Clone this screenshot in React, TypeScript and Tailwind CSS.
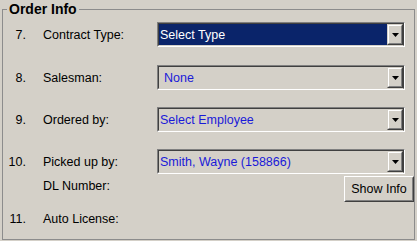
import React from "react";

const font = { fontFamily: '"Liberation Sans", Arial, sans-serif' };

function Arrow() {
  return (
    <div className="w-[16px] h-full bg-[#d4d0c8] border border-t-[#d4d0c8] border-l-[#d4d0c8] border-b-[#404040] border-r-[#404040]">
      <div className="w-full h-full border border-t-white border-l-white border-b-[#808080] border-r-[#808080] flex items-center justify-center">
        <svg width="7" height="4" viewBox="0 0 7 4">
          <polygon points="0,0 7,0 3.5,4" fill="#000" />
        </svg>
      </div>
    </div>
  );
}

function Combo({ text, selected, indent }: { text: string; selected?: boolean; indent?: boolean }) {
  return (
    <div className="w-[248px] h-[25px] border border-t-[#808080] border-l-[#808080] border-b-white border-r-white">
      <div className="w-full h-full border border-t-[#404040] border-l-[#404040] border-b-[#d4d0c8] border-r-[#404040] flex">
        <div
          className={
            selected
              ? "flex-1 flex items-center bg-[#0a246a] text-white pl-[1px]"
              : indent
              ? "flex-1 flex items-center text-[#1a1ad8] pl-[5px]"
              : "flex-1 flex items-center text-[#1a1ad8] pl-[1px]"
          }
        >
          <span className="text-[12.5px] leading-[16px]">{text}</span>
        </div>
        <Arrow />
      </div>
    </div>
  );
}

function Row({ num, label, children }: { num?: string; label: string; children?: React.ReactNode }) {
  return (
    <div className="flex items-center h-[25px]">
      <div className="w-[23px] text-right text-[12.5px] leading-[16px] mt-[1px]">{num}</div>
      <div className="w-[114px] ml-[17px] text-[12.5px] leading-[16px] mt-[1px]">{label}</div>
      {children}
    </div>
  );
}

export default function App() {
  return (
    <div className="w-[417px] h-[241px] bg-[#d4d0c8] text-black pt-[1px]" style={font}>
      <fieldset className="ml-[2px] w-[413px] h-[239px] border border-[#8c8c8c] pt-[5px]">
        <legend className="ml-[4px] px-[2px] text-[14px] leading-[16px] font-bold">Order Info</legend>
        <div className="flex flex-col">
          <Row num="7." label="Contract Type:">
            <Combo text="Select Type" selected />
          </Row>
          <div className="mt-[18px]">
            <Row num="8." label="Salesman:">
              <Combo text="None" indent />
            </Row>
          </div>
          <div className="mt-[17px]">
            <Row num="9." label="Ordered by:">
              <Combo text="Select Employee" />
            </Row>
          </div>
          <div className="mt-[17px]">
            <Row num="10." label="Picked up by:">
              <Combo text="Smith, Wayne (158866)" />
            </Row>
          </div>
          <div className="mt-[2px] flex h-[26px]">
            <div className="w-[23px]" />
            <div className="w-[114px] ml-[17px] mt-[2px] text-[12.5px] leading-[16px]">DL Number:</div>
            <div className="ml-[187px] w-[70px] h-[26px] bg-[#d4d0c8] border border-t-white border-l-white border-b-[#404040] border-r-[#404040]">
              <div className="w-full h-full border border-t-[#d4d0c8] border-l-[#d4d0c8] border-b-[#808080] border-r-[#808080] flex items-center justify-center text-[12.5px] leading-[16px]">
                Show Info
              </div>
            </div>
          </div>
          <div className="mt-[9px] flex h-[16px] items-center">
            <div className="w-[23px] text-right text-[12.5px] leading-[16px]">11.</div>
            <div className="w-[114px] ml-[17px] text-[12.5px] leading-[16px]">Auto License:</div>
          </div>
        </div>
      </fieldset>
    </div>
  );
}
